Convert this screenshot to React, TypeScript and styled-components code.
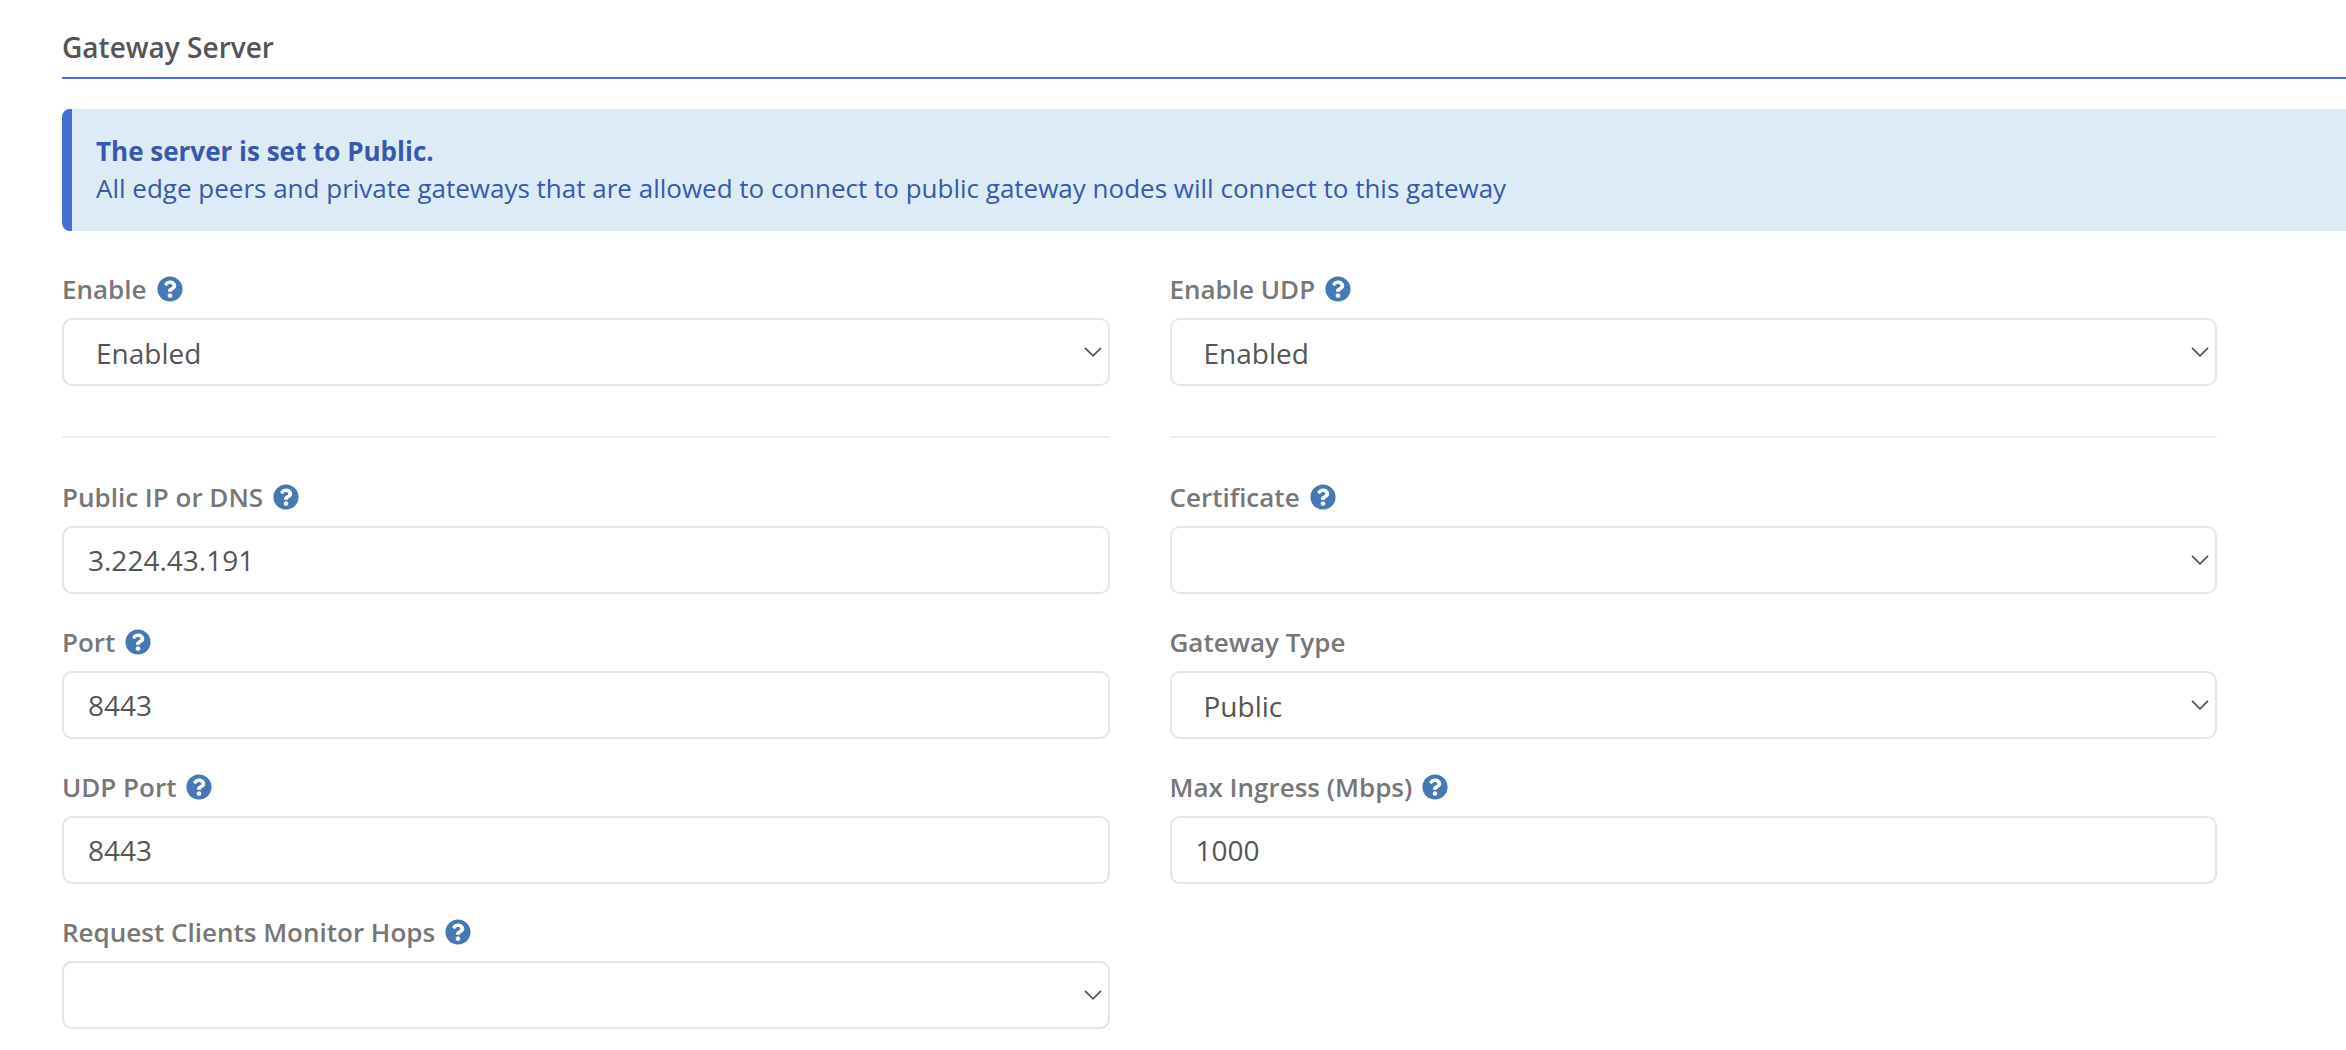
import React, { useId } from "react";
import styled, { createGlobalStyle } from "styled-components";
import { FaQuestionCircle } from "react-icons/fa";

const GlobalStyle = createGlobalStyle`
  *, *::before, *::after { box-sizing: border-box; }
  body {
    margin: 0;
    background: #fff;
    color: #555;
    font-family: "Open Sans", "Noto Sans", sans-serif;
    font-size: 26px;
    line-height: 37px;
  }
`;

const Page = styled.main`
  padding: 27px 0 21px 62px;
`;

const SectionTitle = styled.h1`
  margin: 0 0 30px;
  padding-bottom: 10px;
  border-bottom: 2px solid #446fd6;
  font-size: 28px;
  font-weight: 600;
  line-height: 40px;
`;

const Notice = styled.div`
  margin-bottom: 39px;
  padding: 24px;
  border-left: 10px solid #446fd6;
  border-radius: 8px 0 0 8px;
  background: #ddebf7;
  color: #3759ad;
`;

const NoticeTitle = styled.strong`
  display: block;
  font-weight: 700;
`;

const NoticeText = styled.p`
  margin: 0;
`;

const Form = styled.form`
  margin-right: 129px;
`;

const Columns = styled.div`
  display: grid;
  grid-template-columns: repeat(2, minmax(0, 1fr));
  gap: 29px 60px;
`;

const Divider = styled.hr`
  width: 100%;
  margin: 21px 0 11px;
  border: 0;
  border-top: 2px solid #eee;
`;

const FieldBox = styled.div`
  display: flex;
  flex-direction: column;
  gap: 10px;
`;

const LabelRow = styled.div`
  display: flex;
  align-items: center;
  gap: 10px;
  height: 38px;
`;

const Label = styled.label`
  color: #777;
  font-weight: 600;
`;

const HelpButton = styled.button`
  display: flex;
  padding: 0;
  border: 0;
  background: none;
  color: #4678b6;
  font-size: 26px;
  cursor: help;
`;

const controlStyles = `
  width: 100%;
  height: 68px;
  margin: 0;
  border: 2px solid #e5e5e5;
  border-radius: 10px;
  background: #fff;
  color: #555;
  font-family: inherit;
  font-size: 28px;
  line-height: 40px;
`;

const TextInput = styled.input`
  ${controlStyles}
  padding: 12px 24px;
`;

const SelectBox = styled.div`
  position: relative;
`;

const Select = styled.select`
  ${controlStyles}
  display: block;
  appearance: none;
  padding: 13px 32px 11px;
`;

const Chevron = styled.svg`
  position: absolute;
  top: 28px;
  right: 8px;
  width: 18px;
  height: 12px;
  pointer-events: none;
`;

type FieldProps = {
  label: string;
  value?: string;
  options?: string[];
  help?: boolean;
};

function Field({ label, value = "", options, help = true }: FieldProps) {
  const id = useId();
  return (
    <FieldBox>
      <LabelRow>
        <Label htmlFor={id}>{label}</Label>
        {help && (
          <HelpButton type="button" aria-label={`Help: ${label}`}>
            <FaQuestionCircle aria-hidden="true" />
          </HelpButton>
        )}
      </LabelRow>
      {options ? (
        <SelectBox>
          <Select id={id} defaultValue={value}>
            {options.map((option) => (
              <option key={option} value={option}>
                {option}
              </option>
            ))}
          </Select>
          <Chevron viewBox="0 0 18 12" aria-hidden="true">
            <path d="M1 1.8 9 9.8 17 1.8" fill="none" stroke="#555" strokeWidth="1.7" />
          </Chevron>
        </SelectBox>
      ) : (
        <TextInput id={id} type="text" defaultValue={value} />
      )}
    </FieldBox>
  );
}

export default function App() {
  return (
    <>
      <GlobalStyle />
      <Page>
        <SectionTitle>Gateway Server</SectionTitle>
        <Notice role="status">
          <NoticeTitle>The server is set to Public.</NoticeTitle>
          <NoticeText>
            All edge peers and private gateways that are allowed to connect to public gateway nodes will connect to
            this gateway
          </NoticeText>
        </Notice>
        <Form>
          <Columns>
            <Field label="Enable" value="Enabled" options={["Enabled"]} />
            <Field label="Enable UDP" value="Enabled" options={["Enabled"]} />
            <Divider />
            <Divider />
            <Field label="Public IP or DNS" value="3.224.43.191" />
            <Field label="Certificate" options={[""]} />
            <Field label="Port" value="8443" />
            <Field label="Gateway Type" value="Public" options={["Public"]} help={false} />
            <Field label="UDP Port" value="8443" />
            <Field label="Max Ingress (Mbps)" value="1000" />
            <Field label="Request Clients Monitor Hops" options={[""]} />
          </Columns>
        </Form>
      </Page>
    </>
  );
}
